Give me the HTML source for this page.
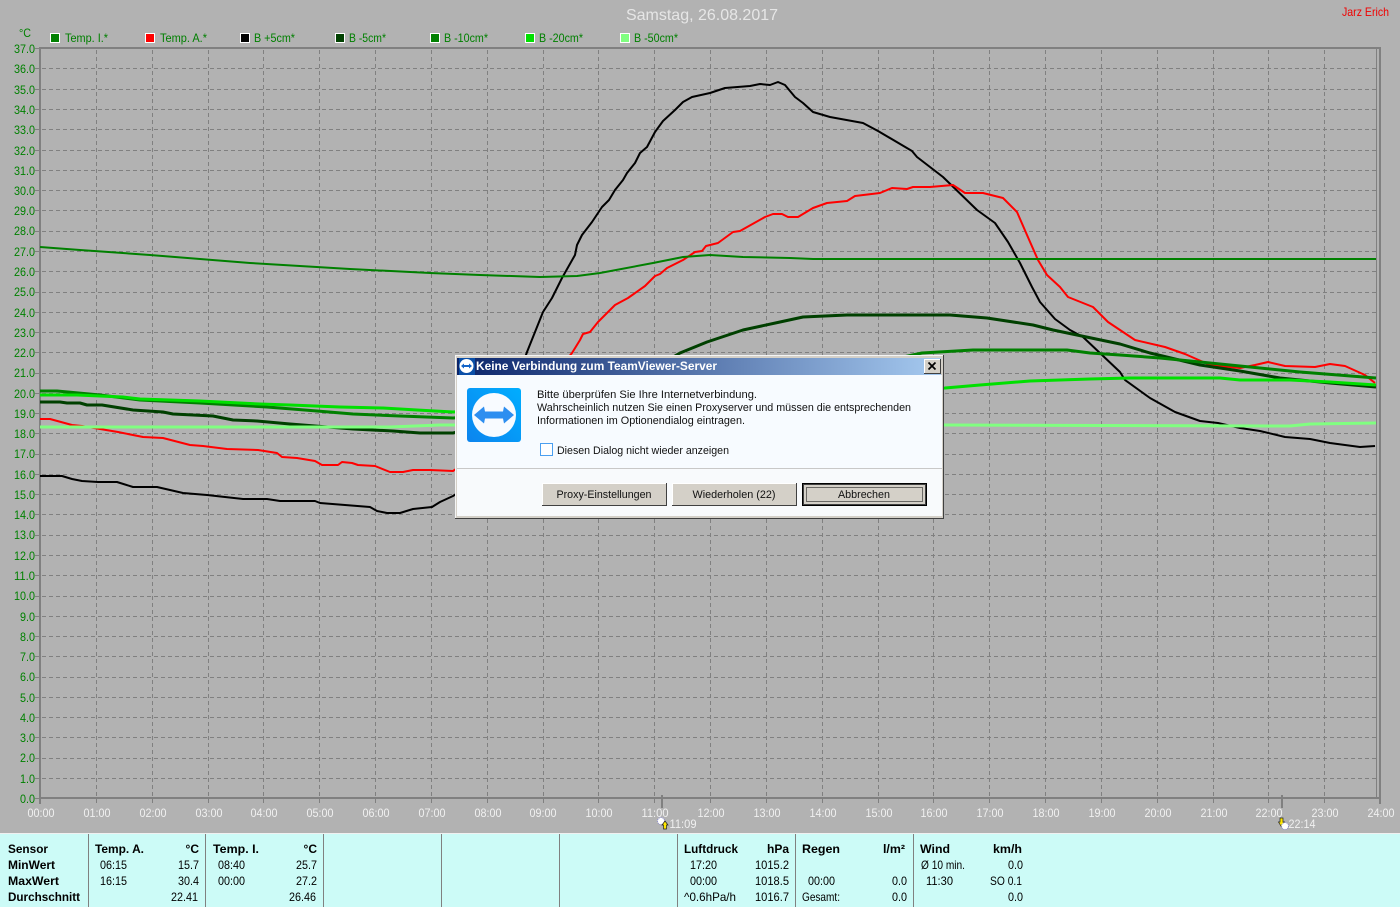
<!DOCTYPE html>
<html><head><meta charset="utf-8"><title>Samstag, 26.08.2017</title>
<style>
html,body{margin:0;padding:0;background:#b2b2b2;width:1400px;height:907px;overflow:hidden}
svg{display:block}
text{font-family:"Liberation Sans",sans-serif}
.y text{font-size:12px;fill:#008000;text-anchor:end}
.x text{font-size:12px;fill:#f0f0f0;text-anchor:middle}
.l text{font-size:12px;fill:#008000}
.p text{font-size:12px;fill:#000}
.p .b{font-weight:bold}
.p .r{text-anchor:end}
.d text{font-size:11px;fill:#111}
polyline{fill:none;stroke-linejoin:round}
</style></head><body>
<svg width="1400" height="907" viewBox="0 0 1400 907" xmlns="http://www.w3.org/2000/svg">
<defs><linearGradient id="tb" x1="0" x2="1" y1="0" y2="0"><stop offset="0" stop-color="#0a246a"/><stop offset="1" stop-color="#a6caf0"/></linearGradient>
<linearGradient id="ic" x1="1" x2="0" y1="0" y2="1"><stop offset="0" stop-color="#00aeff"/><stop offset="1" stop-color="#0c84ee"/></linearGradient></defs>
<rect width="1400" height="907" fill="#b2b2b2"/>
<text x="702" y="20" font-size="16" fill="#e6e6e6" text-anchor="middle" textLength="152" lengthAdjust="spacingAndGlyphs">Samstag, 26.08.2017</text>
<text x="1389" y="16" font-size="12" fill="#f00000" text-anchor="end" textLength="47" lengthAdjust="spacingAndGlyphs">Jarz Erich</text>

<g stroke="#808080" stroke-width="1" stroke-dasharray="4 3" fill="none">
<path d="M42 68.5H1376M42 89.5H1376M42 109.5H1376M42 129.5H1376M42 150.5H1376M42 170.5H1376M42 190.5H1376M42 210.5H1376M42 231.5H1376M42 251.5H1376M42 271.5H1376M42 292.5H1376M42 312.5H1376M42 332.5H1376M42 352.5H1376M42 373.5H1376M42 393.5H1376M42 413.5H1376M42 433.5H1376M42 454.5H1376M42 474.5H1376M42 494.5H1376M42 514.5H1376M42 535.5H1376M42 555.5H1376M42 575.5H1376M42 596.5H1376M42 616.5H1376M42 636.5H1376M42 656.5H1376M42 677.5H1376M42 697.5H1376M42 717.5H1376M42 737.5H1376M42 758.5H1376M42 778.5H1376"/>
<path d="M96.5 50V804M152.5 50V804M208.5 50V804M263.5 50V804M319.5 50V804M375.5 50V804M431.5 50V804M487.5 50V804M543.5 50V804M598.5 50V804M654.5 50V804M710.5 50V804M766.5 50V804M822.5 50V804M878.5 50V804M933.5 50V804M989.5 50V804M1045.5 50V804M1101.5 50V804M1157.5 50V804M1213.5 50V804M1268.5 50V804M1324.5 50V804"/>
</g>
<g stroke="#808080" fill="none">
<path stroke-width="2" d="M39 48H1381M39 798H1381"/>
<path stroke-width="2" d="M40 47V804M1380 47V804"/>
<path stroke-width="1" d="M1376.5 48V798"/>
<path d="M35 48.5H40M35 68.5H40M35 89.5H40M35 109.5H40M35 129.5H40M35 150.5H40M35 170.5H40M35 190.5H40M35 210.5H40M35 231.5H40M35 251.5H40M35 271.5H40M35 292.5H40M35 312.5H40M35 332.5H40M35 352.5H40M35 373.5H40M35 393.5H40M35 413.5H40M35 433.5H40M35 454.5H40M35 474.5H40M35 494.5H40M35 514.5H40M35 535.5H40M35 555.5H40M35 575.5H40M35 596.5H40M35 616.5H40M35 636.5H40M35 656.5H40M35 677.5H40M35 697.5H40M35 717.5H40M35 737.5H40M35 758.5H40M35 778.5H40M35 798.5H40"/>
<path stroke-width="2" d="M662 795V808M1282 795V808"/>
</g>

<g class="y">
<text x="35" y="53" textLength="21" lengthAdjust="spacingAndGlyphs">37.0</text><text x="35" y="73" textLength="21" lengthAdjust="spacingAndGlyphs">36.0</text><text x="35" y="94" textLength="21" lengthAdjust="spacingAndGlyphs">35.0</text><text x="35" y="114" textLength="21" lengthAdjust="spacingAndGlyphs">34.0</text><text x="35" y="134" textLength="21" lengthAdjust="spacingAndGlyphs">33.0</text><text x="35" y="155" textLength="21" lengthAdjust="spacingAndGlyphs">32.0</text><text x="35" y="175" textLength="21" lengthAdjust="spacingAndGlyphs">31.0</text><text x="35" y="195" textLength="21" lengthAdjust="spacingAndGlyphs">30.0</text><text x="35" y="215" textLength="21" lengthAdjust="spacingAndGlyphs">29.0</text><text x="35" y="235" textLength="21" lengthAdjust="spacingAndGlyphs">28.0</text><text x="35" y="256" textLength="21" lengthAdjust="spacingAndGlyphs">27.0</text><text x="35" y="276" textLength="21" lengthAdjust="spacingAndGlyphs">26.0</text><text x="35" y="296" textLength="21" lengthAdjust="spacingAndGlyphs">25.0</text><text x="35" y="317" textLength="21" lengthAdjust="spacingAndGlyphs">24.0</text><text x="35" y="337" textLength="21" lengthAdjust="spacingAndGlyphs">23.0</text><text x="35" y="357" textLength="21" lengthAdjust="spacingAndGlyphs">22.0</text><text x="35" y="377" textLength="21" lengthAdjust="spacingAndGlyphs">21.0</text><text x="35" y="398" textLength="21" lengthAdjust="spacingAndGlyphs">20.0</text><text x="35" y="418" textLength="21" lengthAdjust="spacingAndGlyphs">19.0</text><text x="35" y="438" textLength="21" lengthAdjust="spacingAndGlyphs">18.0</text><text x="35" y="458" textLength="21" lengthAdjust="spacingAndGlyphs">17.0</text><text x="35" y="479" textLength="21" lengthAdjust="spacingAndGlyphs">16.0</text><text x="35" y="499" textLength="21" lengthAdjust="spacingAndGlyphs">15.0</text><text x="35" y="519" textLength="21" lengthAdjust="spacingAndGlyphs">14.0</text><text x="35" y="539" textLength="21" lengthAdjust="spacingAndGlyphs">13.0</text><text x="35" y="560" textLength="21" lengthAdjust="spacingAndGlyphs">12.0</text><text x="35" y="580" textLength="21" lengthAdjust="spacingAndGlyphs">11.0</text><text x="35" y="600" textLength="21" lengthAdjust="spacingAndGlyphs">10.0</text><text x="35" y="621" textLength="15" lengthAdjust="spacingAndGlyphs">9.0</text><text x="35" y="641" textLength="15" lengthAdjust="spacingAndGlyphs">8.0</text><text x="35" y="661" textLength="15" lengthAdjust="spacingAndGlyphs">7.0</text><text x="35" y="681" textLength="15" lengthAdjust="spacingAndGlyphs">6.0</text><text x="35" y="702" textLength="15" lengthAdjust="spacingAndGlyphs">5.0</text><text x="35" y="722" textLength="15" lengthAdjust="spacingAndGlyphs">4.0</text><text x="35" y="742" textLength="15" lengthAdjust="spacingAndGlyphs">3.0</text><text x="35" y="762" textLength="15" lengthAdjust="spacingAndGlyphs">2.0</text><text x="35" y="783" textLength="15" lengthAdjust="spacingAndGlyphs">1.0</text><text x="35" y="803" textLength="15" lengthAdjust="spacingAndGlyphs">0.0</text>
<text x="31" y="37" textLength="12" lengthAdjust="spacingAndGlyphs">°C</text>
</g>

<g class="x">
<text x="41" y="817" textLength="27" lengthAdjust="spacingAndGlyphs">00:00</text><text x="97" y="817" textLength="27" lengthAdjust="spacingAndGlyphs">01:00</text><text x="153" y="817" textLength="27" lengthAdjust="spacingAndGlyphs">02:00</text><text x="209" y="817" textLength="27" lengthAdjust="spacingAndGlyphs">03:00</text><text x="264" y="817" textLength="27" lengthAdjust="spacingAndGlyphs">04:00</text><text x="320" y="817" textLength="27" lengthAdjust="spacingAndGlyphs">05:00</text><text x="376" y="817" textLength="27" lengthAdjust="spacingAndGlyphs">06:00</text><text x="432" y="817" textLength="27" lengthAdjust="spacingAndGlyphs">07:00</text><text x="488" y="817" textLength="27" lengthAdjust="spacingAndGlyphs">08:00</text><text x="543" y="817" textLength="27" lengthAdjust="spacingAndGlyphs">09:00</text><text x="599" y="817" textLength="27" lengthAdjust="spacingAndGlyphs">10:00</text><text x="655" y="817" textLength="27" lengthAdjust="spacingAndGlyphs">11:00</text><text x="711" y="817" textLength="27" lengthAdjust="spacingAndGlyphs">12:00</text><text x="767" y="817" textLength="27" lengthAdjust="spacingAndGlyphs">13:00</text><text x="823" y="817" textLength="27" lengthAdjust="spacingAndGlyphs">14:00</text><text x="879" y="817" textLength="27" lengthAdjust="spacingAndGlyphs">15:00</text><text x="934" y="817" textLength="27" lengthAdjust="spacingAndGlyphs">16:00</text><text x="990" y="817" textLength="27" lengthAdjust="spacingAndGlyphs">17:00</text><text x="1046" y="817" textLength="27" lengthAdjust="spacingAndGlyphs">18:00</text><text x="1102" y="817" textLength="27" lengthAdjust="spacingAndGlyphs">19:00</text><text x="1158" y="817" textLength="27" lengthAdjust="spacingAndGlyphs">20:00</text><text x="1214" y="817" textLength="27" lengthAdjust="spacingAndGlyphs">21:00</text><text x="1269" y="817" textLength="27" lengthAdjust="spacingAndGlyphs">22:00</text><text x="1325" y="817" textLength="27" lengthAdjust="spacingAndGlyphs">23:00</text><text x="1381" y="817" textLength="27" lengthAdjust="spacingAndGlyphs">24:00</text>
<text x="683" y="828" textLength="27" lengthAdjust="spacingAndGlyphs">11:09</text><text x="1302" y="828" textLength="27" lengthAdjust="spacingAndGlyphs">22:14</text>
</g>
<!-- sun markers -->
<circle cx="661" cy="821" r="3.5" fill="#fff" stroke="#8888cc" stroke-width="1" stroke-dasharray="1 1"/>
<path d="M665 821l3 4h-1.5v4h-3v-4H662z" fill="#ffe800" stroke="#222" stroke-width=".7"/>
<path d="M1280 818h3v4h1.500l-3 5-3-5h1.500z" fill="#ffe800" stroke="#222" stroke-width=".7"/>
<circle cx="1285" cy="826" r="3.500" fill="#fff" stroke="#8888cc" stroke-width="1" stroke-dasharray="1 1"/>

<g class="l">
<rect x="50.500" y="33.500" width="9" height="9" fill="#008000" stroke="#fff"/><text x="65" y="42" textLength="43" lengthAdjust="spacingAndGlyphs">Temp. I.*</text>
<rect x="145.500" y="33.500" width="9" height="9" fill="#f00" stroke="#fff"/><text x="160" y="42" textLength="47" lengthAdjust="spacingAndGlyphs">Temp. A.*</text>
<rect x="240.500" y="33.500" width="9" height="9" fill="#000" stroke="#fff"/><text x="254" y="42" textLength="41" lengthAdjust="spacingAndGlyphs">B +5cm*</text>
<rect x="335.500" y="33.500" width="9" height="9" fill="#004000" stroke="#fff"/><text x="349" y="42" textLength="37" lengthAdjust="spacingAndGlyphs">B -5cm*</text>
<rect x="430.500" y="33.500" width="9" height="9" fill="#008000" stroke="#fff"/><text x="444" y="42" textLength="44" lengthAdjust="spacingAndGlyphs">B -10cm*</text>
<rect x="525.500" y="33.500" width="9" height="9" fill="#00e000" stroke="#fff"/><text x="539" y="42" textLength="44" lengthAdjust="spacingAndGlyphs">B -20cm*</text>
<rect x="620.500" y="33.500" width="9" height="9" fill="#80ff80" stroke="#fff"/><text x="634" y="42" textLength="44" lengthAdjust="spacingAndGlyphs">B -50cm*</text>
</g>

<!-- curves -->
<polyline stroke="#000" stroke-width="2" points="40,476 62,476 72,479 82,481 98,482 117,482 133,487 157,487 183,493 207,495 243,499 267,499 280,501 315,501 320,503 370,507 377,511 387,513 400,513 413,509 432,507 440,502 453,496 470,485 500,430 527,352 535,332 543,312 552,298 562,278 575,255 577,245 582,235 592,222 602,207 609,200 615,190 623,180 627,173 635,163 640,153 647,147 655,132 663,121 675,110 683,102 692,97 710,93 725,88 750,86 760,84 770,85 778,82 785,85 795,97 803,103 813,112 830,117 863,123 878,131 912,151 917,157 943,177 977,210 995,223 1008,242 1020,263 1032,287 1040,302 1055,319 1070,330 1083,337 1120,372 1125,380 1150,398 1175,412 1200,421 1218,423 1240,428 1260,431 1285,437 1310,439 1330,443 1360,447 1375,446"/>
<polyline stroke="#f00" stroke-width="2" points="40,419 50,419 72,425 82,426 100,429 118,432 143,437 163,438 190,445 203,446 227,449 258,450 277,453 282,457 297,458 315,461 322,465 338,465 342,462 352,463 358,465 375,466 390,472 403,472 413,470 430,470 453,471 500,440 572,353 580,340 583,334 590,332 598,322 610,310 615,305 628,298 645,286 655,276 660,274 667,268 683,260 695,252 702,251 706,246 718,243 733,232 740,231 765,217 773,214 782,214 788,217 798,217 813,208 827,203 847,201 855,196 880,193 892,188 907,189 913,187 930,187 953,185 965,193 983,193 1003,198 1017,212 1027,235 1038,260 1047,275 1060,287 1068,297 1093,307 1108,322 1120,330 1135,340 1165,347 1185,354 1210,365 1240,368 1255,365 1268,362 1285,366 1315,367 1330,364 1345,366 1365,375 1375,383"/>
<polyline stroke="#008000" stroke-width="2" points="40,247 80,250 150,255 250,263 350,269 430,273 480,275 540,277 577,276 600,273 653,263 683,257 710,255 743,257 790,258 813,259 1376,259"/>
<polyline stroke="#004000" stroke-width="3" points="40,402 60,402 67,403 80,403 87,405 102,405 133,410 163,412 173,414 213,416 233,420 257,421 290,424 353,429 393,431 420,433 453,433 600,400 680,353 707,342 743,330 780,322 803,317 847,315 950,315 987,318 1033,325 1053,330 1120,344 1150,353 1200,365 1240,371 1280,378 1330,383 1376,387"/>
<polyline stroke="#008000" stroke-width="3" points="40,391 57,391 100,395 140,400 200,403 267,407 317,411 353,414 400,416 453,418 700,400 922,353 973,350 1067,350 1090,353 1120,355 1160,358 1200,362 1250,367 1300,372 1376,378"/>
<polyline stroke="#00e000" stroke-width="3" points="40,395 77,395 123,397 140,399 200,401 260,404 290,405 340,407 383,408 417,410 453,412 700,400 945,388 980,385 1030,381 1090,379 1130,378 1220,378 1240,380 1290,380 1330,382 1376,385"/>
<polyline stroke="#80ff80" stroke-width="3" points="40,427 390,427 440,425 455,425 945,425 1290,426 1310,424 1376,423"/>

<!-- bottom panel -->
<rect x="0" y="833" width="1400" height="1" fill="#f0f0f0"/>
<rect x="0" y="834" width="1400" height="73" fill="#ccfbf7"/>
<path d="M88.500 834V907M205.500 834V907M323.500 834V907M441.500 834V907M559.500 834V907M677.500 834V907M795.500 834V907M913.500 834V907" stroke="#808080" fill="none"/>
<g class="p">
<text class="b" x="8" y="853" textLength="40" lengthAdjust="spacingAndGlyphs">Sensor</text>
<text class="b" x="8" y="869" textLength="47" lengthAdjust="spacingAndGlyphs">MinWert</text>
<text class="b" x="8" y="885" textLength="51" lengthAdjust="spacingAndGlyphs">MaxWert</text>
<text class="b" x="8" y="901" textLength="72" lengthAdjust="spacingAndGlyphs">Durchschnitt</text>
<text class="b" x="95" y="853" textLength="49" lengthAdjust="spacingAndGlyphs">Temp. A.</text><text class="b r" x="199" y="853">°C</text>
<text x="100" y="869" textLength="27" lengthAdjust="spacingAndGlyphs">06:15</text><text class="r" x="199" y="869" textLength="21" lengthAdjust="spacingAndGlyphs">15.7</text>
<text x="100" y="885" textLength="27" lengthAdjust="spacingAndGlyphs">16:15</text><text class="r" x="199" y="885" textLength="21" lengthAdjust="spacingAndGlyphs">30.4</text>
<text class="r" x="198" y="901" textLength="27" lengthAdjust="spacingAndGlyphs">22.41</text>
<text class="b" x="213" y="853" textLength="46" lengthAdjust="spacingAndGlyphs">Temp. I.</text><text class="b r" x="317" y="853">°C</text>
<text x="218" y="869" textLength="27" lengthAdjust="spacingAndGlyphs">08:40</text><text class="r" x="317" y="869" textLength="21" lengthAdjust="spacingAndGlyphs">25.7</text>
<text x="218" y="885" textLength="27" lengthAdjust="spacingAndGlyphs">00:00</text><text class="r" x="317" y="885" textLength="21" lengthAdjust="spacingAndGlyphs">27.2</text>
<text class="r" x="316" y="901" textLength="27" lengthAdjust="spacingAndGlyphs">26.46</text>
<text class="b" x="684" y="853" textLength="54" lengthAdjust="spacingAndGlyphs">Luftdruck</text><text class="b r" x="789" y="853" textLength="22" lengthAdjust="spacingAndGlyphs">hPa</text>
<text x="690" y="869" textLength="27" lengthAdjust="spacingAndGlyphs">17:20</text><text class="r" x="789" y="869" textLength="34" lengthAdjust="spacingAndGlyphs">1015.2</text>
<text x="690" y="885" textLength="27" lengthAdjust="spacingAndGlyphs">00:00</text><text class="r" x="789" y="885" textLength="34" lengthAdjust="spacingAndGlyphs">1018.5</text>
<text x="684" y="901" textLength="52" lengthAdjust="spacingAndGlyphs">^0.6hPa/h</text><text class="r" x="789" y="901" textLength="34" lengthAdjust="spacingAndGlyphs">1016.7</text>
<text class="b" x="802" y="853" textLength="38" lengthAdjust="spacingAndGlyphs">Regen</text><text class="b r" x="905" y="853" textLength="22" lengthAdjust="spacingAndGlyphs">l/m²</text>
<text x="808" y="885" textLength="27" lengthAdjust="spacingAndGlyphs">00:00</text><text class="r" x="907" y="885" textLength="15" lengthAdjust="spacingAndGlyphs">0.0</text>
<text x="802" y="901" textLength="38" lengthAdjust="spacingAndGlyphs">Gesamt:</text><text class="r" x="907" y="901" textLength="15" lengthAdjust="spacingAndGlyphs">0.0</text>
<text class="b" x="920" y="853" textLength="30" lengthAdjust="spacingAndGlyphs">Wind</text><text class="b r" x="1022" y="853" textLength="29" lengthAdjust="spacingAndGlyphs">km/h</text>
<text x="921" y="869" textLength="44" lengthAdjust="spacingAndGlyphs">Ø 10 min.</text><text class="r" x="1023" y="869" textLength="15" lengthAdjust="spacingAndGlyphs">0.0</text>
<text x="926" y="885" textLength="27" lengthAdjust="spacingAndGlyphs">11:30</text><text class="r" x="1022" y="885" textLength="32" lengthAdjust="spacingAndGlyphs">SO 0.1</text>
<text class="r" x="1023" y="901" textLength="15" lengthAdjust="spacingAndGlyphs">0.0</text>
</g>

<!-- dialog -->
<g class="d">
<rect x="455" y="355" width="489" height="163" fill="#d4d0c8"/>
<path d="M455.500 518V355.500H943" stroke="#f4f4f4" fill="none"/>
<path d="M943.500 355V518.500H455" stroke="#404040" fill="none"/>
<rect x="457" y="358" width="484" height="17" fill="url(#tb)"/>
<rect x="457" y="375" width="485" height="141" fill="#f7fbff"/>
<rect x="457" y="469" width="485" height="47" fill="#f8fafc"/>
<rect x="457" y="468" width="485" height="1" fill="#c8c8c8"/>
<rect x="459" y="358" width="16" height="17" fill="#0a4fa8"/>
<circle cx="466.500" cy="366" r="7" fill="#fff"/>
<path d="M461 366l3-2.500v1.500h5v-1.500l3 2.500-3 2.500v-1.500h-5v1.500z" fill="#1464c8"/>
<text x="476" y="370" font-size="12" font-weight="bold" style="font-size:12px;font-weight:bold;fill:#fff" textLength="241" lengthAdjust="spacingAndGlyphs">Keine Verbindung zum TeamViewer-Server</text>
<rect x="924" y="359" width="16" height="14" fill="#d4d0c8"/>
<path d="M924.500 373V359.500H940" stroke="#fff" fill="none"/>
<path d="M940.500 359V373.500H924" stroke="#404040" fill="none"/>
<path d="M928.500 362.500l7 7M935.500 362.500l-7 7" stroke="#000" stroke-width="1.700" fill="none"/>

<rect x="467" y="388" width="54" height="54" rx="3" fill="url(#ic)"/>
<circle cx="494" cy="415" r="22" fill="#f8fbff"/>
<path d="M474 415l10-8.500 1 5h18l1-5 10 8.500-10 8.500-1-5h-18l-1 5z" fill="#2d8ef0"/>

<text x="537" y="398" textLength="220" lengthAdjust="spacingAndGlyphs">Bitte überprüfen Sie Ihre Internetverbindung.</text>
<text x="537" y="411" textLength="374" lengthAdjust="spacingAndGlyphs">Wahrscheinlich nutzen Sie einen Proxyserver und müssen die entsprechenden</text>
<text x="537" y="424" textLength="208" lengthAdjust="spacingAndGlyphs">Informationen im Optionendialog eintragen.</text>
<rect x="540.500" y="443.500" width="12" height="12" fill="#fdfeff" stroke="#4a9ff0"/>
<text x="557" y="454" textLength="172" lengthAdjust="spacingAndGlyphs">Diesen Dialog nicht wieder anzeigen</text>

<rect x="542" y="483" width="125" height="23" fill="#d4d0c8"/>
<path d="M542.500 505V483.500H666" stroke="#fff" fill="none"/>
<path d="M666.500 483V505.500H542" stroke="#404040" fill="none"/>
<text x="604" y="498" text-anchor="middle" textLength="95" lengthAdjust="spacingAndGlyphs">Proxy-Einstellungen</text>
<rect x="672" y="483" width="125" height="23" fill="#d4d0c8"/>
<path d="M672.500 505V483.500H796" stroke="#fff" fill="none"/>
<path d="M796.500 483V505.500H672" stroke="#404040" fill="none"/>
<text x="734" y="498" text-anchor="middle" textLength="83" lengthAdjust="spacingAndGlyphs">Wiederholen (22)</text>
<rect x="802.500" y="483.500" width="124" height="22" fill="#d4d0c8" stroke="#000"/>
<rect x="803.500" y="484.500" width="122" height="20" fill="none" stroke="#404040"/>
<rect x="806.500" y="487.500" width="116" height="14" fill="none" stroke="#000" stroke-dasharray="1 1"/>
<text x="864" y="498" text-anchor="middle" textLength="52" lengthAdjust="spacingAndGlyphs">Abbrechen</text>
</g>
</svg>
</body></html>
